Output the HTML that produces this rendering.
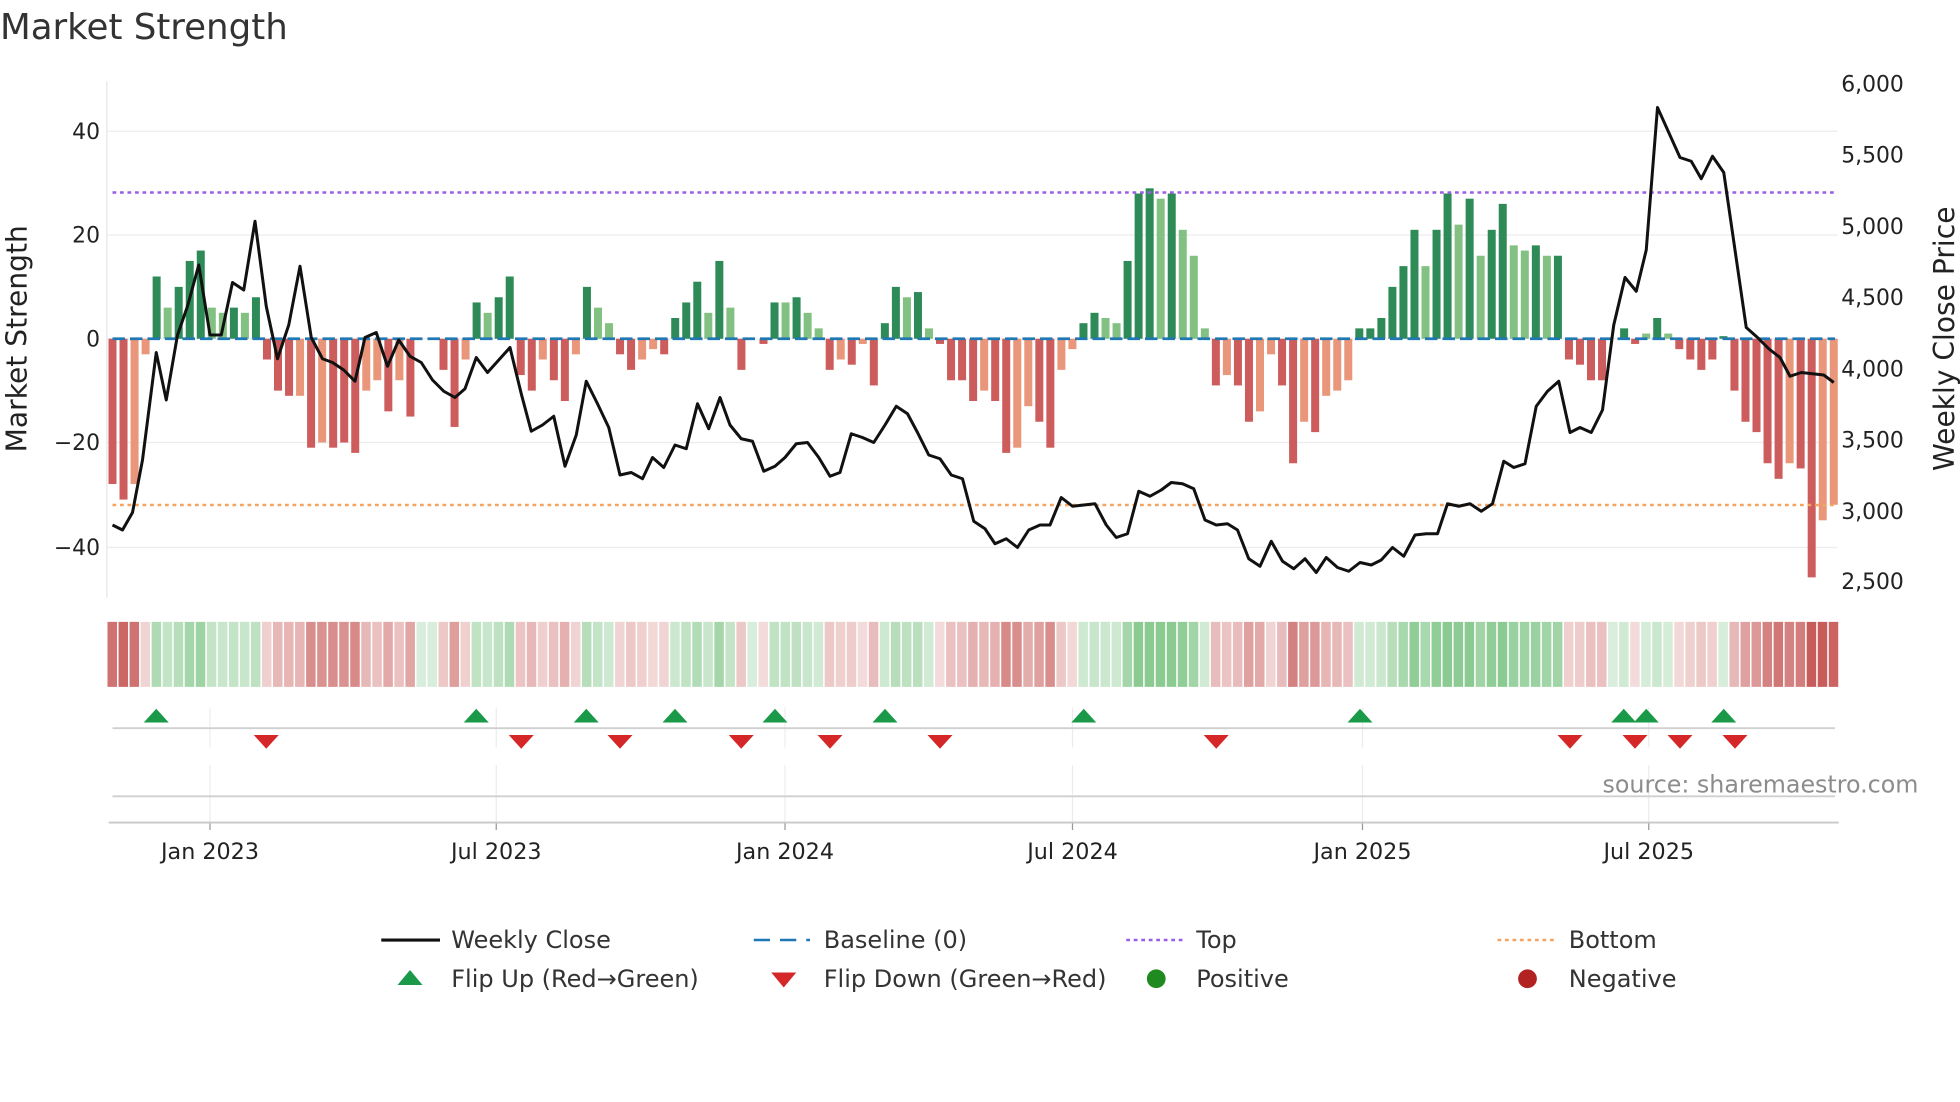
<!DOCTYPE html>
<html><head><meta charset="utf-8"><style>
html,body{margin:0;padding:0;background:#fff;}
svg{display:block;font-family:"DejaVu Sans","Liberation Sans",sans-serif;}
</style></head><body>
<svg id="s" width="1960" height="1102" viewBox="0 0 1568 881.6" xmlns="http://www.w3.org/2000/svg">
<text x="0" y="31" font-size="28.5" fill="#333">Market Strength</text>
<g id="grid"></g>
<g id="g"></g>
<text x="1282" y="634" font-size="19" fill="#8c8c8c">source: sharemaestro.com</text>
</svg>
<script>
var NS="http://www.w3.org/2000/svg",g=document.getElementById('g');
function el(t,a,txt){var e=document.createElementNS(NS,t);for(var k in a)e.setAttribute(k,a[k]);if(txt!=null)e.textContent=txt;g.appendChild(e);return e;}
[105,188,271,354,438].forEach(function(y){el('line',{x1:86,x2:1470,y1:y,y2:y,stroke:'#ececf0','stroke-width':1});});
el('line',{x1:85.5,x2:85.5,y1:65,y2:478,stroke:'#e6e6e6','stroke-width':1});
var yl=[[40,105],[20,188],[0,271],['\u221220',354],['\u221240',438]];
yl.forEach(function(a){el('text',{x:80,y:a[1]+6,'font-size':17.5,'text-anchor':'end',fill:'#222'},a[0]);});
var pl=[['6,000',67],['5,500',124],['5,000',181],['4,500',238],['4,000',295],['3,500',352],['3,000',409],['2,500',465]];
pl.forEach(function(a){el('text',{x:1473,y:a[1]+6,'font-size':17.5,fill:'#222'},a[0]);});
el('text',{x:0,y:0,'font-size':22.5,'text-anchor':'middle',fill:'#222',transform:'translate(21,271) rotate(-90)'},'Market Strength');
el('text',{x:0,y:0,'font-size':22.5,'text-anchor':'middle',fill:'#222',transform:'translate(1563,271) rotate(-90)'},'Weekly Close Price');
var B="-28r -31r -28s -3s 12d 6l 10d 15d 17d 6l 5l 6d 5l 8d -4r -10r -11r -11s -21r -20s -21r -20r -22r -10s -8s -14r -8s -15r 0r 0r -6r -17r -4s 7d 5l 8d 12d -7r -10r -4s -8r -12r -3s 10d 6l 3l -3r -6r -4s -2s -3r 4d 7d 11d 5l 15d 6l -6r 0r -1r 7d 7l 8d 5l 2l -6r -4s -5r -1s -9r 3d 10d 8l 9d 2l -1r -8r -8r -12r -10s -12r -22r -21s -13s -16r -21r -6s -2s 3d 5d 4l 3l 15d 28d 29d 27l 28d 21l 16l 2l -9r -7s -9r -16r -14s -3s -9r -24r -16s -18r -11s -10s -8s 2d 2d 4d 10d 14d 21d 14l 21d 28d 22l 27d 16l 21d 26d 18l 17l 18d 16l 16d -4r -5r -8r -8r 0r 2d -1r 1l 4d 1l -2r -4r -6r -4r 0.5d -10r -16r -18r -24r -27r -24s -25r -46r -35s -32s".split(' ');
var col={d:'#2e8b57',l:'#82c182',r:'#cd5c5c',s:'#e9967a'};
var N=B.length,dx=(1467-90)/(N-1);
B.forEach(function(b,i){var v=parseFloat(b),x=90+dx*i;
 var c=v>=0?'rgba(100,185,110,'+(0.25+Math.min(0.5,v/45))+')':'rgba(195,80,78,'+(0.18+Math.min(0.75,-v/45))+')';
 el('rect',{x:x-4,y:497.5,width:7.6,height:52,fill:c});});
B.forEach(function(b,i){var v=parseFloat(b),t=b.slice(-1),x=90+dx*i;var h=Math.abs(v)*4.15;
 if(h>0.3)el('rect',{x:x-3.2,y:v>0?271-h:271,width:6.4,height:h,fill:col[t]});});
el('line',{x1:90,x2:1468,y1:271,y2:271,stroke:'#1f77b4','stroke-width':2.2,'stroke-dasharray':'10 4'});
el('line',{x1:90,x2:1468,y1:154,y2:154,stroke:'#9b5de5','stroke-width':2,'stroke-dasharray':'3 3'});
el('line',{x1:90,x2:1468,y1:404,y2:404,stroke:'#f4a460','stroke-width':2,'stroke-dasharray':'3 3'});
var P=[90,420,98,424,106,410,114,368,125,282,133,320,142,268,150,245,159,212,168,268,177,268,186,226,195,232,204,177,213,245,222,287,231,260,240,213,249,270,258,287,266,290,275,296,284,305,292,270,301,266,310,293,319,272,328,285,337,290,346,304,355,313,364,318,372,311,381,286,390,298,399,288,408,278,417,315,425,345,434,340,443,333,452,373,461,348,469,305,478,323,487,342,496,380,505,378,514,383,522,366,531,374,540,356,549,359,558,323,567,343,576,318,584,340,593,351,602,353,611,377,620,373,628,366,637,355,646,354,655,366,664,381,672,378,681,347,690,350,699,354,708,340,717,325,726,331,734,346,743,364,752,367,761,380,770,383,779,417,788,423,796,435,805,431,814,438,823,424,832,420,840,420,849,398,858,405,867,404,876,403,885,420,893,430,902,427,911,393,920,397,929,392,937,386,946,387,955,391,964,416,973,420,982,419,990,424,999,447,1008,453,1017,433,1026,449,1035,455,1044,447,1053,458,1061,446,1070,454,1079,457,1088,450,1097,452,1105,448,1114,438,1123,445,1132,428,1141,427,1150,427,1158,403,1167,405,1176,403,1185,409,1194,403,1203,369,1211,374,1220,371,1229,325,1238,313,1247,305,1256,346,1264,342,1273,346,1282,328,1291,260,1300,222,1309,233,1317,200,1326,86,1335,106,1344,126,1353,129,1361,143,1370,125,1379,138,1388,200,1397,262,1406,270,1415,279,1424,286,1432,301,1441,298,1450,299,1459,300,1467,306];
el('polyline',{points:P.join(' '),fill:'none',stroke:'#111','stroke-width':2.4,'stroke-linejoin':'round'});
var D=[[168,'Jan 2023'],[397,'Jul 2023'],[628,'Jan 2024'],[858,'Jul 2024'],[1090,'Jan 2025'],[1319,'Jul 2025']];
D.forEach(function(d){el('line',{x1:d[0],x2:d[0],y1:566,y2:598,stroke:'#ececf0'});el('line',{x1:d[0],x2:d[0],y1:612,y2:658,stroke:'#ececf0'});
 el('line',{x1:d[0],x2:d[0],y1:658,y2:664,stroke:'#999'});el('text',{x:d[0],y:687,'font-size':17.8,'text-anchor':'middle',fill:'#222'},d[1]);});
el('line',{x1:90,x2:1468,y1:582.5,y2:582.5,stroke:'#d0d0d0','stroke-width':1.5});
el('line',{x1:90,x2:1468,y1:637,y2:637,stroke:'#d0d0d0','stroke-width':1.5});
el('line',{x1:87,x2:1471,y1:658,y2:658,stroke:'#c8c8c8','stroke-width':1.5});
[125,381,469,540,620,708,867,1088,1299,1317,1379].forEach(function(x){el('path',{d:'M'+(x-10)+' 578 L'+x+' 567 L'+(x+10)+' 578 Z',fill:'#1a9a48'});});
[213,417,496,593,664,752,973,1256,1308,1344,1388].forEach(function(x){el('path',{d:'M'+(x-10)+' 588 L'+(x+10)+' 588 L'+x+' 599 Z',fill:'#d62728'});});
function lt(x,y,t){el('text',{x:x,y:y+6.5,'font-size':19.2,fill:'#333'},t);}
el('line',{x1:305,x2:352,y1:752,y2:752,stroke:'#111','stroke-width':2.5});lt(361,752,'Weekly Close');
el('line',{x1:603,x2:648,y1:752,y2:752,stroke:'#1f77b4','stroke-width':2,'stroke-dasharray':'13 8'});lt(659,752,'Baseline (0)');
el('line',{x1:901,x2:946,y1:752,y2:752,stroke:'#9b5de5','stroke-width':2,'stroke-dasharray':'3 3'});lt(957,752,'Top');
el('line',{x1:1198,x2:1243,y1:752,y2:752,stroke:'#f4a460','stroke-width':2,'stroke-dasharray':'3 3'});lt(1255,752,'Bottom');
el('path',{d:'M318 788 L328 776 L338 788 Z',fill:'#1a9a48'});lt(361,783,'Flip Up (Red\u2192Green)');
el('path',{d:'M617 778 L637 778 L627 790 Z',fill:'#d62728'});lt(659,783,'Flip Down (Green\u2192Red)');
el('circle',{cx:925,cy:783,r:7.5,fill:'#1f8a1f'});lt(957,783,'Positive');
el('circle',{cx:1222,cy:783,r:7.5,fill:'#b22222'});lt(1255,783,'Negative');
</script>
</body></html>
